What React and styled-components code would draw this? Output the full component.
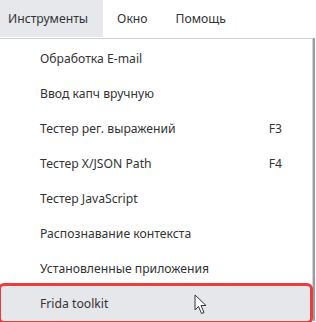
import React from 'react'
import styled, { createGlobalStyle } from 'styled-components'

const GlobalStyle = createGlobalStyle`
  body {
    margin: 0;
    background: #ffffff;
    font-family: "Noto Sans", "Open Sans", sans-serif;
    color: #2b2b2b;
  }
`

const Page = styled.div`
  width: 316px;
  height: 322px;
  overflow: hidden;
`

const MenuBar = styled.div`
  display: flex;
  height: 37px;
  align-items: stretch;
`

const MenuTab = styled.div`
  display: flex;
  align-items: center;
  padding: ${p => (p.active ? '0 15px 0 8px' : '0 14px')};
  background: ${p => (p.active ? '#e6e8ec' : 'transparent')};
  font-size: 12.2px;
  color: #333;
`

const Dropdown = styled.div`
  margin-top: 1px;
  margin-left: -2px;
  width: 314px;
  border-top: 1px solid #cfd3d8;
  border-right: 1px solid #cfd3d8;
  box-shadow: 2px 0 0 #9a9ea4;
  background: #fff;
  padding-top: 2px;
`

const Item = styled.div`
  display: flex;
  align-items: center;
  justify-content: space-between;
  height: 35px;
  padding: 0 30px 0 42px;
  font-size: 12.2px;
  color: #333;
  position: relative;
  margin: ${p => (p.selected ? '0 2px 0 3px' : '0')};
  background: ${p => (p.selected ? '#e6e7eb' : 'transparent')};
  ${p => p.selected && `
    outline: 3px solid #ec3c3c;
    border-radius: 3px;
    padding-left: 39px;
  `}
`

const Shortcut = styled.span`
  font-size: 12.2px;
  color: #333;
`

const Cursor = () => (
  <svg width="14" height="22" viewBox="0 0 14 22" style={{ position: 'absolute', left: 193, top: 8 }}>
    <path d="M1 1 L1 16 L4.5 12.5 L7.5 19.5 L10 18.5 L7 11.5 L12 11.5 Z" fill="#fff" stroke="#333" strokeWidth="1" strokeLinejoin="round" />
  </svg>
)

const items = [
  { label: 'Обработка E-mail' },
  { label: 'Ввод капч вручную' },
  { label: 'Тестер рег. выражений', key: 'F3' },
  { label: 'Тестер X/JSON Path', key: 'F4' },
  { label: 'Тестер JavaScript' },
  { label: 'Распознавание контекста' },
  { label: 'Установленные приложения' },
]

export default function App() {
  return (
    <Page>
      <GlobalStyle />
      <MenuBar>
        <MenuTab active>Инструменты</MenuTab>
        <MenuTab>Окно</MenuTab>
        <MenuTab>Помощь</MenuTab>
      </MenuBar>
      <Dropdown>
        {items.map(it => (
          <Item key={it.label}>
            <span>{it.label}</span>
            {it.key && <Shortcut>{it.key}</Shortcut>}
          </Item>
        ))}
        <Item selected>
          <span>Frida toolkit</span>
          <Cursor />
        </Item>
      </Dropdown>
    </Page>
  )
}
